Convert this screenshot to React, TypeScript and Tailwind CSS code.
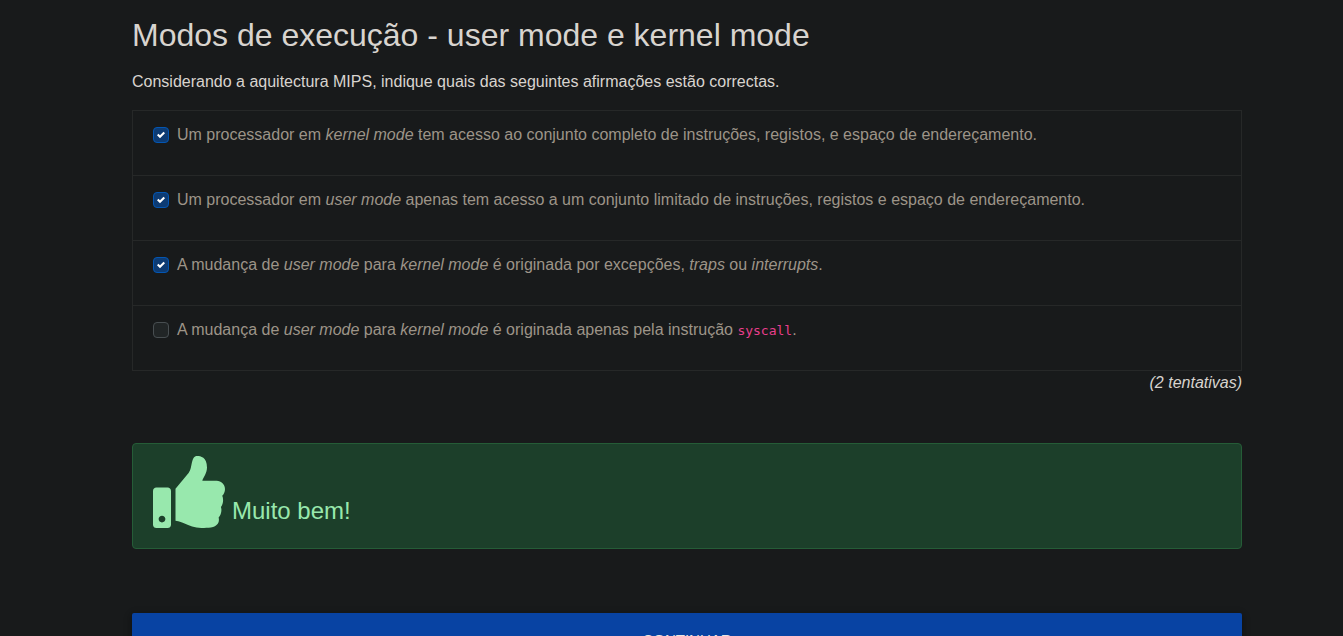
import type { ReactNode } from "react";

const options: { id: string; checked: boolean; text: ReactNode }[] = [
  {
    id: "kernel-access",
    checked: true,
    text: (
      <>
        Um processador em <em>kernel mode</em> tem acesso ao conjunto completo de instruções, registos, e espaço de endereçamento.
      </>
    ),
  },
  {
    id: "user-access",
    checked: true,
    text: (
      <>
        Um processador em <em>user mode</em> apenas tem acesso a um conjunto limitado de instruções, registos e espaço de endereçamento.
      </>
    ),
  },
  {
    id: "mode-change",
    checked: true,
    text: (
      <>
        A mudança de <em>user mode</em> para <em>kernel mode</em> é originada por excepções, <em>traps</em> ou <em>interrupts</em>.
      </>
    ),
  },
  {
    id: "mode-syscall",
    checked: false,
    text: (
      <>
        A mudança de <em>user mode</em> para <em>kernel mode</em> é originada apenas pela instrução{" "}
        <code className="font-['DejaVu_Sans_Mono',monospace] text-[13px] leading-4 text-[#e83e8c]">syscall</code>.
      </>
    ),
  },
];

function Option({ id, checked, text }: (typeof options)[number]) {
  return (
    <li className="flex items-start gap-2 px-5 pt-3 pb-7">
      <span className="grid h-6 w-4 shrink-0 place-items-center">
        <input
          id={id}
          type="checkbox"
          defaultChecked={checked}
          className="peer col-start-1 row-start-1 size-4 appearance-none rounded border border-[#484e51] bg-[#212526] checked:border-[#0356b3] checked:bg-[#0d3b73]"
        />
        <svg viewBox="0 0 8 8" className="pointer-events-none col-start-1 row-start-1 hidden size-2 fill-white peer-checked:block" aria-hidden="true">
          <path d="M6.564.75l-3.59 3.612-1.538-1.55L0 4.26 2.974 7.25 8 2.193z" />
        </svg>
      </span>
      <label htmlFor={id}>{text}</label>
    </li>
  );
}

export default function App() {
  return (
    <div className="min-h-screen bg-[#181a1b] pl-[31px] font-['Liberation_Sans',Arial,sans-serif] text-base text-[#d8d4cf]">
      <main className="mx-auto max-w-[1140px] px-[15px] pt-4 pb-8">
        <h1 className="mb-4 text-[32px] leading-[38px]">Modos de execução - user mode e kernel mode</h1>
        <p className="mb-4">Considerando a aquitectura MIPS, indique quais das seguintes afirmações estão correctas.</p>
        <ul className="divide-y divide-[#262828] border border-[#262828] text-[#9d9488]">
          {options.map((option) => (
            <Option key={option.id} {...option} />
          ))}
        </ul>
        <p className="text-right italic">(2 tentativas)</p>
        <div role="status" className="mt-12 flex items-start gap-[7px] rounded border border-[#255c37] bg-[#1c3f2a] px-5 pt-3 pb-5 text-[#98e8ad]">
          <svg viewBox="0 0 512 512" className="size-[72px]" fill="currentColor" aria-hidden="true">
            <path d="M104 224H24c-13.255 0-24 10.745-24 24v240c0 13.255 10.745 24 24 24h80c13.255 0 24-10.745 24-24V248c0-13.255-10.745-24-24-24zM64 472c-13.255 0-24-10.745-24-24s10.745-24 24-24 24 10.745 24 24-10.745 24-24 24zM384 81.452c0 42.416-25.97 66.208-33.277 94.548h101.723c33.397 0 59.397 27.746 59.553 58.098.084 17.938-7.546 37.249-19.439 49.197l-.11.11c9.836 23.337 8.237 56.037-9.308 79.469 8.681 25.895-.069 57.704-16.382 74.757 4.298 17.598 2.244 32.575-6.148 44.632C440.202 511.587 389.616 512 346.839 512l-2.845-.001c-48.287-.017-87.806-17.598-119.56-31.725-15.957-7.099-36-14-64.434-19.274V232L253 120c17-21 17-46 23-70C284 18 292 0 314 0c24 0 70 8 70 81.452z" />
          </svg>
          <span className="self-end text-2xl leading-[34px]">Muito bem!</span>
        </div>
        <button
          type="button"
          className="mt-16 w-full rounded-xs bg-[#0843a3] py-4 text-[15px] leading-[22px] text-[#e8e6e3] uppercase shadow-[0_2px_5px_rgba(0,0,0,0.2),0_2px_10px_rgba(0,0,0,0.2)]"
        >
          Continuar
        </button>
      </main>
    </div>
  );
}
